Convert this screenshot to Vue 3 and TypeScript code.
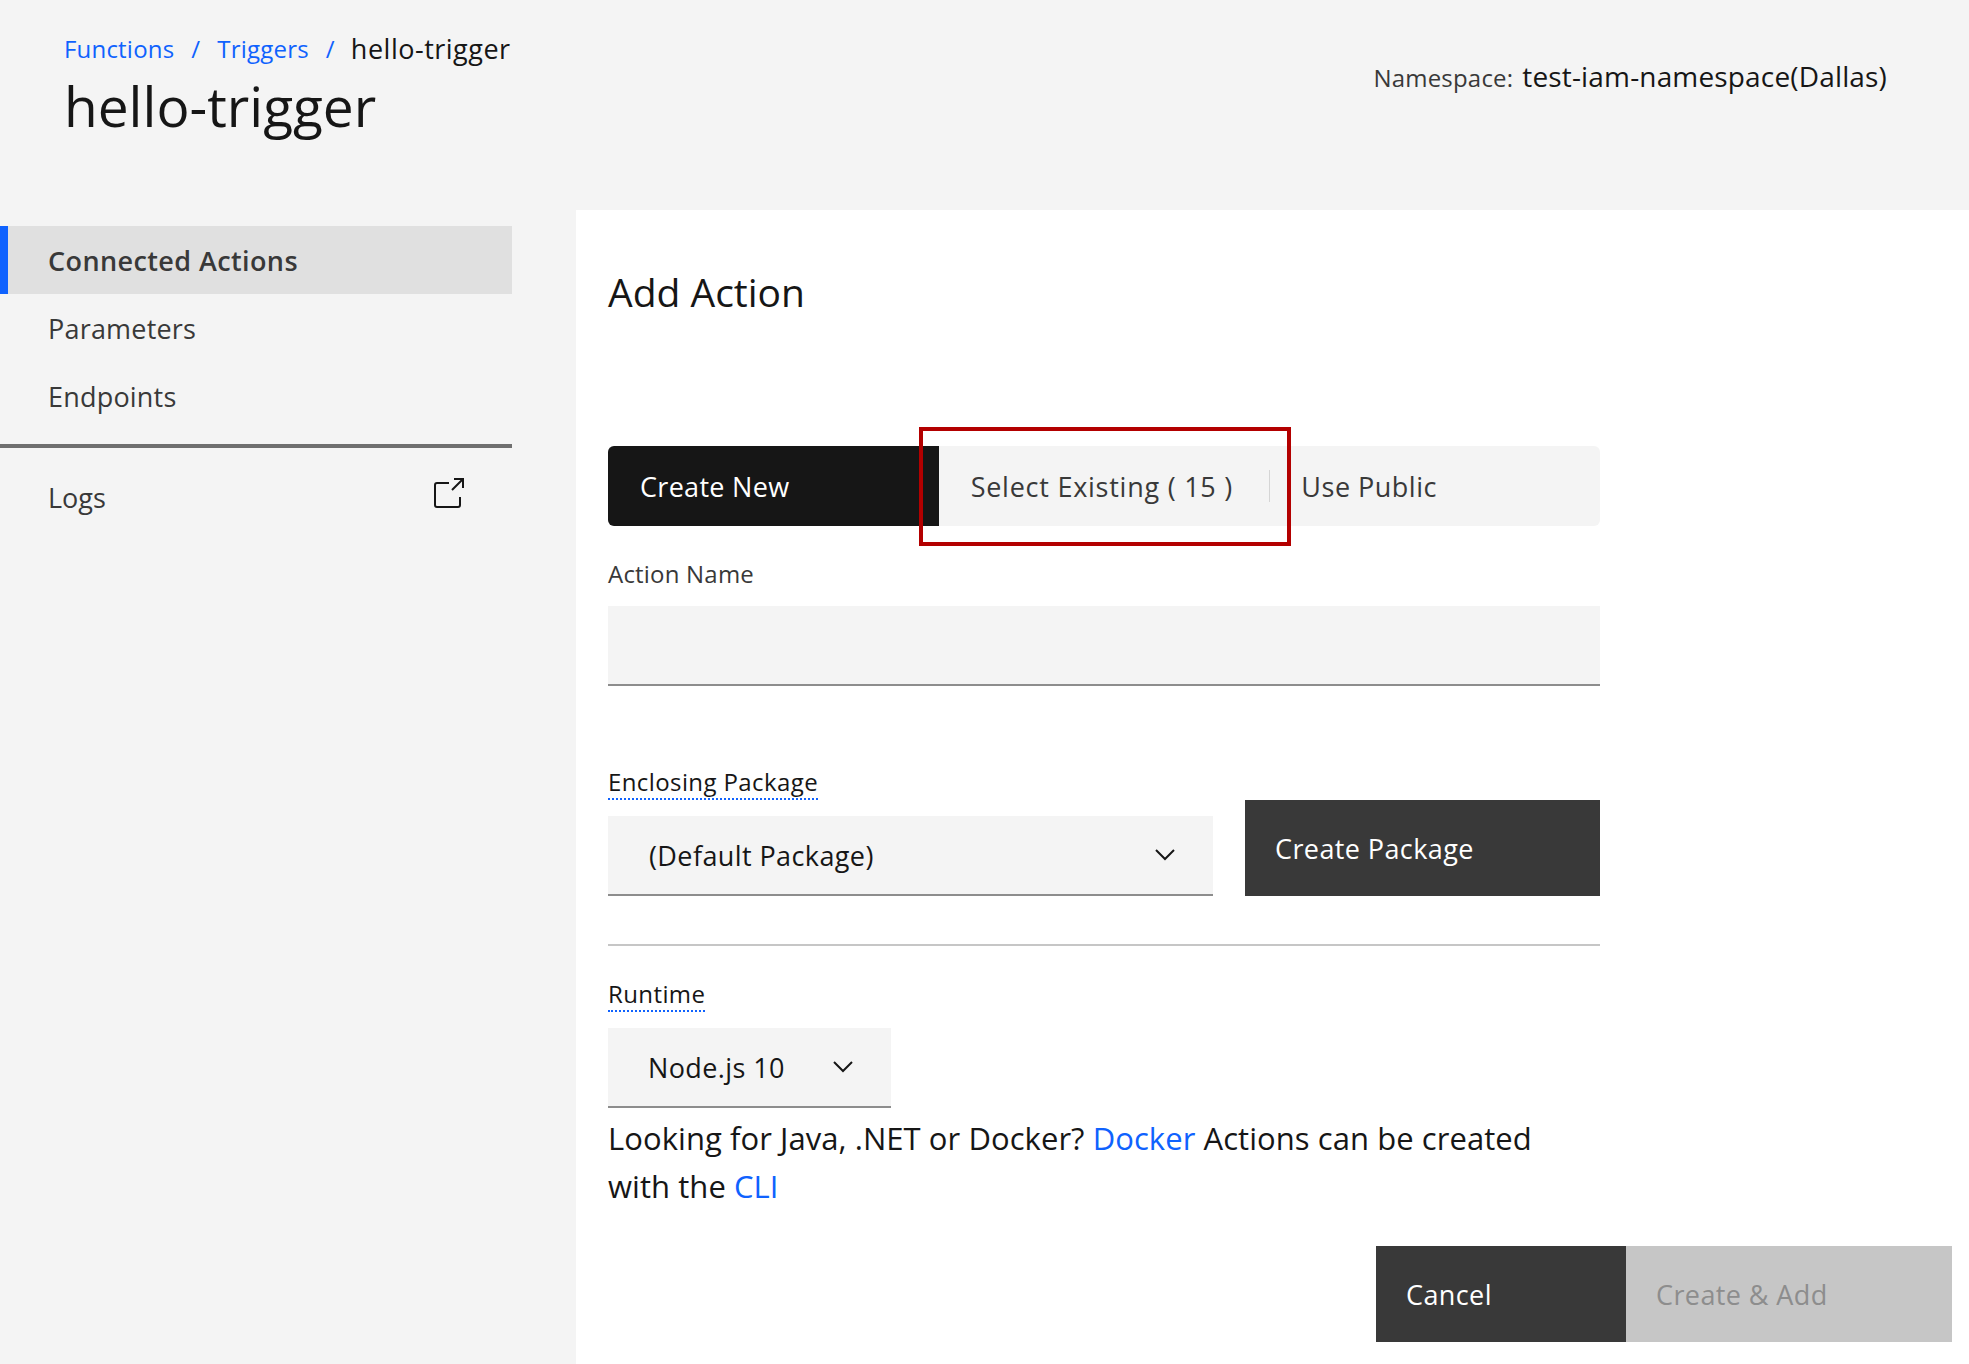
<script setup lang="ts">
import { ref } from 'vue'

const navItems = ['Connected Actions', 'Parameters', 'Endpoints']
const activeNav = ref('Connected Actions')
const tabs = ['Create New', 'Select Existing ( 15 )', 'Use Public']
const activeTab = ref('Create New')
</script>

<template>
  <div class="page">
    <header class="top">
      <div class="title-wrap">
        <nav class="crumbs">
          <a class="link">Functions</a>
          <span class="sep">/</span>
          <a class="link">Triggers</a>
          <span class="sep">/</span>
          <span class="current">hello-trigger</span>
        </nav>
        <h1>hello-trigger</h1>
      </div>
      <div class="namespace">
        <span class="ns-label">Namespace:</span>
        <span class="ns-value">test-iam-namespace(Dallas)</span>
      </div>
    </header>

    <div class="body">
      <aside class="side">
        <ul class="side-list">
          <li
            v-for="item in navItems"
            :key="item"
            class="side-item"
            :class="{ active: item === activeNav }"
            @click="activeNav = item"
          >
            {{ item }}
          </li>
        </ul>
        <div class="logs">
          <span>Logs</span>
          <svg class="ext" width="32" height="32" viewBox="0 0 32 32" fill="none" stroke="#161616" stroke-width="2">
            <path d="M16 6H4a2 2 0 0 0-2 2v20a2 2 0 0 0 2 2h21a2 2 0 0 0 2-2v-8" />
            <path d="M19 13L30 2M21 2h9v9" />
          </svg>
        </div>
      </aside>

      <main class="main">
        <h2>Add Action</h2>

        <div class="tabs">
          <button
            v-for="(tab, i) in tabs"
            :key="tab"
            class="tab"
            :class="{ on: tab === activeTab, split: i === 1 }"
            type="button"
            @click="activeTab = tab"
          >
            {{ tab }}
          </button>
          <div class="callout"></div>
        </div>

        <label class="label name-label">Action Name</label>
        <input class="text-input" type="text" />

        <div class="package-row">
          <div class="package-col">
            <span class="label tip">Enclosing Package</span>
            <div class="select wide">
              <span>(Default Package)</span>
              <svg width="20" height="12" viewBox="0 0 20 12" fill="none" stroke="#161616" stroke-width="2">
                <path d="M1 1l9 9 9-9" />
              </svg>
            </div>
          </div>
          <button class="btn dark package-btn" type="button">Create Package</button>
        </div>

        <hr class="rule" />

        <span class="label tip">Runtime</span>
        <div class="select narrow">
          <span>Node.js 10</span>
          <svg width="20" height="12" viewBox="0 0 20 12" fill="none" stroke="#161616" stroke-width="2">
            <path d="M1 1l9 9 9-9" />
          </svg>
        </div>

        <p class="hint">
          Looking for Java, .NET or Docker? <a class="link">Docker</a> Actions can be created<br />
          with the <a class="link">CLI</a>
        </p>

        <div class="actions">
          <button class="btn dark cancel" type="button">Cancel</button>
          <button class="btn off" type="button" disabled>Create &amp; Add</button>
        </div>
      </main>
    </div>
  </div>
</template>

<style scoped>
.page {
  display: flex;
  flex-direction: column;
  height: 1364px;
  overflow: hidden;
  background: #f4f4f4;
  color: #161616;
  font-family: 'Open Sans', 'Noto Sans', sans-serif;
}

.top {
  display: flex;
  justify-content: space-between;
  flex: 0 0 210px;
}

.title-wrap {
  padding: 31px 0 0 64px;
}

.crumbs {
  display: flex;
  align-items: center;
  gap: 14px;
  font-size: 24px;
  line-height: 36px;
  letter-spacing: 0.2px;
}

.link {
  color: #0f62fe;
}

.sep {
  color: #0f62fe;
  margin: 0 3px;
}

.current {
  margin-left: -1px;
  font-size: 27px;
  letter-spacing: 0.5px;
}

h1 {
  margin: 5px 0 0;
  font-size: 55px;
  font-weight: 400;
  line-height: 68px;
}

.namespace {
  display: flex;
  align-items: baseline;
  gap: 9px;
  padding: 57px 82px 0 0;
}

.ns-label {
  font-size: 24px;
  letter-spacing: 0.2px;
  color: #393939;
}

.ns-value {
  font-size: 28px;
  letter-spacing: 0.16px;
}

.body {
  display: grid;
  grid-template-columns: 576px 1fr;
  flex: 1;
  min-height: 0;
}

.side {
  width: 512px;
  padding-top: 16px;
}

.side-list {
  list-style: none;
  margin: 0;
  padding: 0 0 14px;
  border-bottom: 4px solid #6f6f6f;
}

.side-item {
  display: flex;
  align-items: center;
  height: 68px;
  padding-left: 48px;
  font-size: 27px;
  letter-spacing: 0.2px;
  color: #393939;
}

.side-item.active {
  font-weight: 600;
  letter-spacing: 0.4px;
  background: #e0e0e0;
  box-shadow: inset 8px 0 0 #0f62fe;
}

.logs {
  display: flex;
  align-items: center;
  justify-content: space-between;
  padding: 29px 47px 0 48px;
  font-size: 27px;
  color: #393939;
}

.ext {
  margin-bottom: 8px;
}

.main {
  display: flex;
  flex-direction: column;
  align-items: flex-start;
  padding: 0 0 0 32px;
  background: #fff;
}

h2 {
  margin: 57px 0 0;
  font-size: 39px;
  font-weight: 400;
  line-height: 50px;
}

.tabs {
  position: relative;
  display: grid;
  grid-template-columns: repeat(3, 1fr);
  width: 992px;
  height: 80px;
  margin-top: 129px;
  border-radius: 6px;
  background: #f4f4f4;
}

.tab {
  padding: 0 0 0 32px;
  border: 0;
  background: transparent;
  color: #393939;
  font: inherit;
  font-size: 27px;
  letter-spacing: 0.3px;
  text-align: left;
}

.tab:last-of-type {
  letter-spacing: 0.5px;
}

.tab.on {
  border-radius: 6px 0 0 6px;
  background: #161616;
  color: #fff;
}

.tab.split {
  position: relative;
  letter-spacing: 0.75px;
}

.tab.split::after {
  content: '';
  position: absolute;
  top: 24px;
  right: -1px;
  width: 1px;
  height: 32px;
  background: #d5d5d5;
}

.callout {
  position: absolute;
  top: -19px;
  left: 311px;
  width: 372px;
  height: 119px;
  box-sizing: border-box;
  border: 4px solid #b30000;
  pointer-events: none;
}

.label {
  font-size: 24px;
  letter-spacing: 0.2px;
  line-height: 32px;
  color: #393939;
}

.name-label {
  margin-top: 32px;
}

.text-input {
  box-sizing: border-box;
  width: 992px;
  height: 80px;
  margin-top: 16px;
  border: 0;
  border-bottom: 2px solid #8d8d8d;
  border-radius: 0;
  background: #f4f4f4;
}

.package-row {
  display: flex;
  align-items: flex-end;
  justify-content: space-between;
  width: 992px;
  margin-top: 81px;
}

.package-col {
  display: flex;
  flex-direction: column;
  align-items: flex-start;
}

.tip {
  padding-bottom: 1px;
  border-bottom: 2px dotted #0f62fe;
  color: #161616;
  letter-spacing: 0.4px;
  line-height: 30px;
}

.select {
  display: flex;
  align-items: center;
  justify-content: space-between;
  box-sizing: border-box;
  height: 80px;
  margin-top: 16px;
  padding: 0 38px 0 40px;
  border-bottom: 2px solid #8d8d8d;
  background: #f4f4f4;
  font-size: 27px;
  letter-spacing: 0.4px;
}

.wide {
  width: 605px;
  padding-left: 41px;
}

.narrow {
  width: 283px;
}

.btn {
  display: flex;
  align-items: center;
  box-sizing: border-box;
  height: 96px;
  border: 0;
  font: inherit;
  font-size: 27px;
  letter-spacing: 0.4px;
}

.dark {
  background: #393939;
  color: #fff;
}

.package-btn {
  width: 355px;
  padding: 0 0 0 30px;
}

.rule {
  width: 992px;
  height: 2px;
  margin: 48px 0 33px;
  border: 0;
  background: #c6c6c6;
}

.hint {
  margin: 6px 0 0;
  font-size: 31px;
  letter-spacing: 0.06px;
  line-height: 48px;
}

.actions {
  display: flex;
  align-self: flex-end;
  margin: 36px 17px 0 0;
}

.cancel {
  width: 250px;
  padding-left: 30px;
}

.off {
  width: 326px;
  padding-left: 30px;
  background: #c6c6c6;
  color: #8d8d8d;
}
</style>
